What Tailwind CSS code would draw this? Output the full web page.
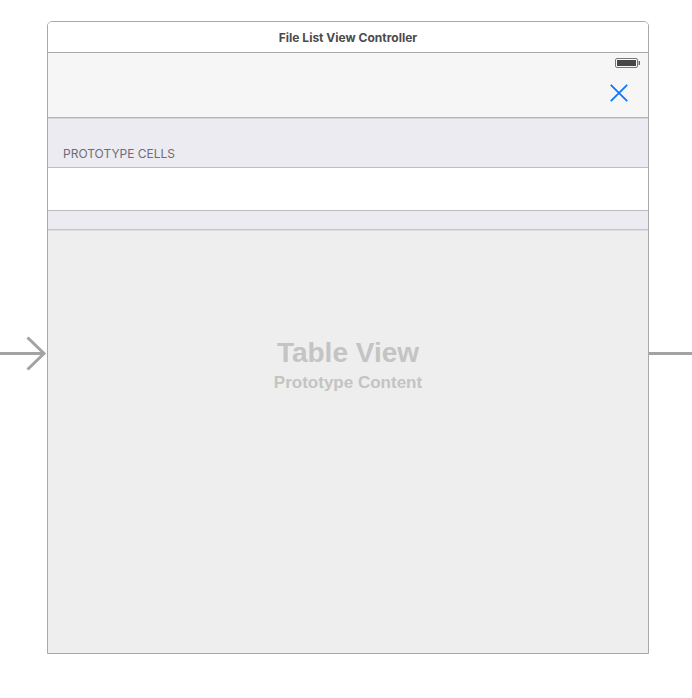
<!DOCTYPE html>
<html lang="en">
<head>
<meta charset="utf-8">
<meta name="viewport" content="width=device-width, initial-scale=1">
<title>File List View Controller</title>
<script src="https://cdn.jsdelivr.net/npm/@tailwindcss/browser@4"></script>
</head>
<body class="bg-white font-['Inter',sans-serif]">
<main class="flex min-h-screen">
  <!-- incoming segue -->
  <div class="w-[47px] shrink-0 pt-[336px]">
    <svg class="block" width="47" height="35" viewBox="0 0 47 35" fill="none" stroke="#a3a3a3" stroke-width="3" aria-hidden="true"><path d="M0 17.5H44M27.5 1.5L44 17.5L27.5 33.5"/></svg>
  </div>
  <section class="mt-[21px] mb-11 flex min-w-0 flex-1 flex-col overflow-hidden rounded-t-[5px] border border-[#a9a9a9] bg-[#eeeeee]">
    <h1 class="flex h-[31px] items-center justify-center border-b border-[#a9a9a9] bg-white pt-0.5 text-[12px] font-bold text-[#4b4b4b]">File List View Controller</h1>
    <header class="flex h-[65px] flex-col items-end border-b border-[#b4b4b8] bg-[#f6f6f6] pt-[5px] pr-2">
      <svg class="block" width="25" height="11" viewBox="0 0 25 11" role="img" aria-label="Battery full"><rect x="0.5" y="0.5" width="22" height="9" rx="1.5" fill="#fafafa" stroke="#777"/><rect x="2" y="2" width="19" height="6" fill="#474747"/><path d="M24 3c1 .5 1 3.500 0 4z" fill="#555" stroke="#555" stroke-width=".7"/></svg>
      <button type="button" aria-label="Close" class="mt-3 mr-[9px] flex size-6 items-center justify-center text-[#0b76ff]"><svg width="18" height="18" viewBox="0 0 18 18" fill="none" stroke="currentColor" stroke-width="1.8" aria-hidden="true"><path d="M.8.8L17.200 17.200M17.200.8L.8 17.200"/></svg></button>
    </header>
    <h2 class="flex h-[50px] items-end border-t border-b border-t-[#d6d6dc] border-b-[#bdbdc1] bg-[#ecebf2] px-[15px] pb-1 text-[12px] leading-[18px] font-normal text-[#6d6d72]">PROTOTYPE CELLS</h2>
    <div class="h-[43px] border-b border-[#bdbdc1] bg-white"></div>
    <div class="h-[19px] border-b border-[#c4c4ca] bg-[#ecebf2]"></div>
    <div class="flex-1 border-t border-[#dcdcdc] pt-[106px] text-center font-['Liberation_Sans',sans-serif] font-bold text-[#c4c4c4]">
      <p class="text-[28px] leading-8">Table View</p>
      <p class="mt-1 text-[17px] leading-5">Prototype Content</p>
    </div>
  </section>
  <!-- outgoing segue -->
  <div class="w-[43px] shrink-0 pt-[352px]"><div class="h-[3px] bg-[#a3a3a3]"></div></div>
</main>
</body>
</html>
